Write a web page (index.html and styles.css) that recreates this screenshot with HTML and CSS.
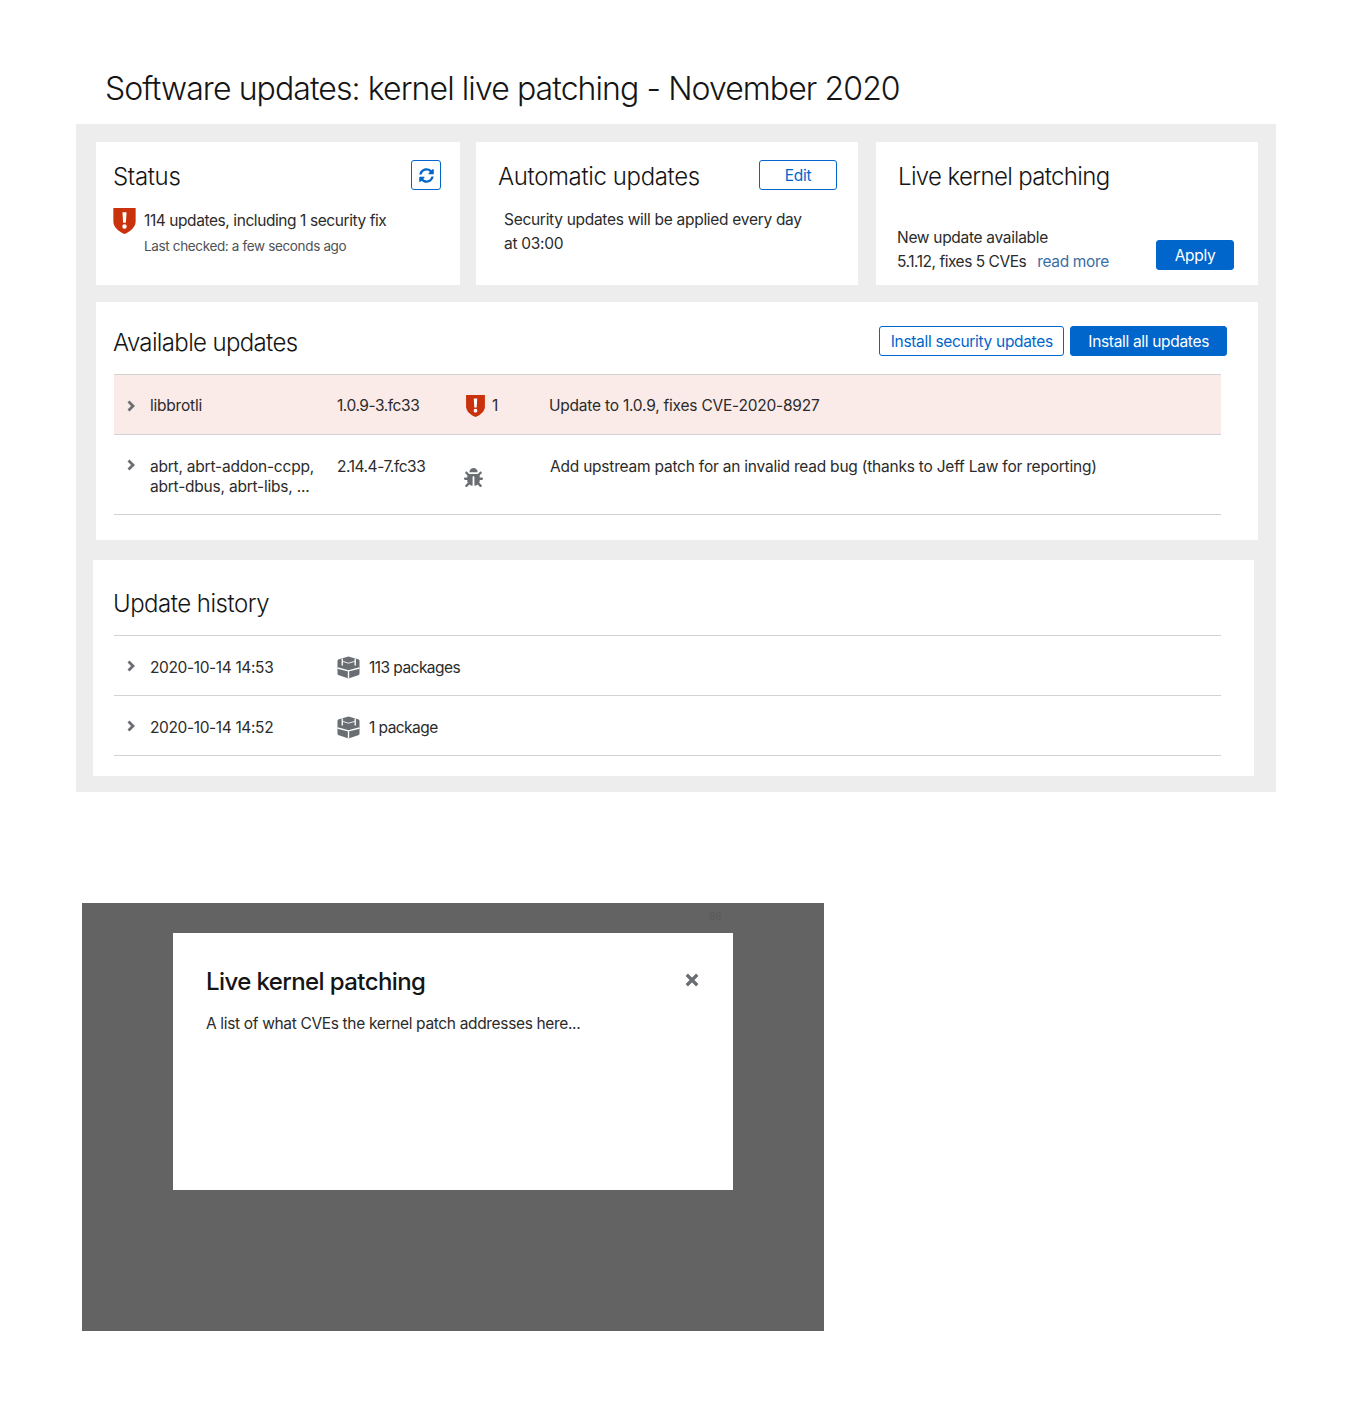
FILE: index.html
```html
<!DOCTYPE html>
<html>
<head>
    <meta charset="utf-8" />
    <title>Software updates: kernel live patching</title>
    <link rel="stylesheet" href="styles.css">
</head>
<body>
    <h1 class="page-title">Software updates: kernel live patching - November 2020</h1>

    <div class="panel">
        <div class="top-row">
            <section class="card card-status">
                <div class="card-head">
                    <h2>Status</h2>
                    <button class="btn-icon">
                        <svg width="15" height="15" viewBox="0 0 512 512"><path fill="#06c" d="M370.72 133.28C339.458 104.008 298.888 87.962 255.848 88c-77.458.068-144.328 53.178-162.791 126.85-1.344 5.363-6.122 9.15-11.651 9.15H24.103c-7.498 0-13.194-6.807-11.807-14.176C33.933 94.924 134.813 8 256 8c66.448 0 126.791 26.136 171.315 68.685L463.03 40.97C478.149 25.851 504 36.559 504 57.941V192c0 13.255-10.745 24-24 24H345.941c-21.382 0-32.09-25.851-16.971-40.971l41.75-41.749zM32 296h134.059c21.382 0 32.09 25.851 16.971 40.971l-41.75 41.75c31.262 29.273 71.835 45.319 114.876 45.28 77.418-.07 144.315-53.144 162.787-126.849 1.344-5.363 6.122-9.15 11.651-9.15h57.304c7.498 0 13.194 6.807 11.807 14.176C478.067 417.076 377.187 504 256 504c-66.448 0-126.791-26.136-171.315-68.685L48.97 471.03C33.851 486.149 8 475.441 8 454.059V320c0-13.255 10.745-24 24-24z"/></svg>
                    </button>
                </div>
                <div class="status-line">
                    <svg class="shield shield-lg" viewBox="0 0 24 28"><path fill="#c9320c" d="M0 0H24V14.500C24 21 17.500 25.800 12 28C6.500 25.800 0 21 0 14.500Z"/><path fill="#fff" d="M9.800 4.500H14.200L13.500 16H10.500ZM12 17.500A2.400 2.400 0 1 1 12 22.300A2.400 2.400 0 1 1 12 17.500Z"/></svg>
                    <div>
                        <p class="status-text">114 updates, including 1 security fix</p>
                        <p class="status-sub">Last checked: a few seconds ago</p>
                    </div>
                </div>
            </section>

            <section class="card card-auto">
                <div class="card-head">
                    <h2>Automatic updates</h2>
                    <button class="btn btn-outline btn-edit">Edit</button>
                </div>
                <p class="auto-text">Security updates will be applied every day<br>at 03:00</p>
            </section>

            <section class="card card-live">
                <h2>Live kernel patching</h2>
                <div class="live-foot">
                    <p>New update available<br><span class="live-version">5.1.12, fixes 5 CVEs</span> <a href="#" class="read-more">read more</a></p>
                    <button class="btn btn-primary btn-apply">Apply</button>
                </div>
            </section>
        </div>

        <section class="card card-available">
            <div class="card-head">
                <h2>Available updates</h2>
                <div class="actions">
                    <button class="btn btn-outline btn-security">Install security updates</button>
                    <button class="btn btn-primary">Install all updates</button>
                </div>
            </div>
            <div class="update-list">
                <div class="update-row danger">
                    <svg class="chevron" viewBox="0 0 8 12"><path d="M1.500 1.500L6 6L1.500 10.500"/></svg>
                    <div class="u-name">libbrotli</div>
                    <div class="u-version">1.0.9-3.fc33</div>
                    <div class="u-type">
                        <svg class="shield shield-sm" viewBox="0 0 24 28"><path fill="#c9320c" d="M0 0H24V14.500C24 21 17.500 25.800 12 28C6.500 25.800 0 21 0 14.500Z"/><path fill="#fff" d="M9.800 4.500H14.200L13.500 16H10.500ZM12 17.500A2.400 2.400 0 1 1 12 22.300A2.400 2.400 0 1 1 12 17.500Z"/></svg>
                        <span>1</span>
                    </div>
                    <div class="u-desc">Update to 1.0.9, fixes CVE-2020-8927</div>
                </div>
                <div class="update-row tall">
                    <svg class="chevron" viewBox="0 0 8 12"><path d="M1.500 1.500L6 6L1.500 10.500"/></svg>
                    <div class="u-name">abrt, abrt-addon-ccpp,<br>abrt-dbus, abrt-libs, ...</div>
                    <div class="u-version">2.14.4-7.fc33</div>
                    <div class="u-type">
                        <svg class="bug" viewBox="0 0 512 512"><path fill="#6a6e73" d="M511.988 288.9c-.478 17.43-15.217 31.1-32.653 31.1H424v16c0 21.864-4.882 42.584-13.6 61.145l60.228 60.228c12.496 12.497 12.496 32.758 0 45.255-12.498 12.497-32.759 12.496-45.256 0l-54.736-54.736C345.886 467.965 314.351 480 280 480V236c0-6.627-5.373-12-12-12h-24c-6.627 0-12 5.373-12 12v244c-34.351 0-65.886-12.035-90.636-32.108l-54.736 54.736c-12.498 12.497-32.759 12.496-45.256 0-12.496-12.497-12.496-32.758 0-45.255l60.228-60.228C92.882 378.584 88 357.864 88 336v-16H32.666C15.230 320 .491 306.330.013 288.900-.484 270.816 14.028 256 32 256h56v-58.745l-46.628-46.628c-12.496-12.497-12.496-32.758 0-45.255 12.498-12.497 32.758-12.497 45.256 0L141.255 160h229.489l54.627-54.627c12.498-12.497 32.758-12.497 45.256 0 12.496 12.497 12.496 32.758 0 45.255L424 197.255V256h56c17.972 0 32.484 14.816 31.988 32.900zM257 0c-61.856 0-112 50.144-112 112h224C369 50.144 318.856 0 257 0z"/></svg>
                    </div>
                    <div class="u-desc shift">Add upstream patch for an invalid read bug (thanks to Jeff Law for reporting)</div>
                </div>
            </div>
        </section>

        <section class="card card-history">
            <h2>Update history</h2>
            <div class="history-list">
                <div class="history-row">
                    <svg class="chevron" viewBox="0 0 8 12"><path d="M1.500 1.500L6 6L1.500 10.500"/></svg>
                    <div class="h-date">2020-10-14 14:53</div>
                    <svg class="cube" viewBox="0 0 24 24"><path class="cube-fill" d="M2 3.500L12 .5L22 3.500C23 3.800 23.500 4.500 23.500 5.500V18C23.500 19 23 19.800 22 20.200L12 23.500L2 20.200C1 19.800 .5 19 .5 18V5.500C.5 4.500 1 3.800 2 3.500Z"/><path class="cube-gap" d="M5.500 2.500V10M19 2.500V10M.5 12.500L12 15.500L23.500 12.500M12 15.500V23.500"/><path class="cube-edge" d="M5.500 5.500L12 7.500L19 5.500"/></svg>
                    <div class="h-count">113 packages</div>
                </div>
                <div class="history-row">
                    <svg class="chevron" viewBox="0 0 8 12"><path d="M1.500 1.500L6 6L1.500 10.500"/></svg>
                    <div class="h-date">2020-10-14 14:52</div>
                    <svg class="cube" viewBox="0 0 24 24"><path class="cube-fill" d="M2 3.500L12 .5L22 3.500C23 3.800 23.500 4.500 23.500 5.500V18C23.500 19 23 19.800 22 20.200L12 23.500L2 20.200C1 19.800 .5 19 .5 18V5.500C.5 4.500 1 3.800 2 3.500Z"/><path class="cube-gap" d="M5.500 2.500V10M19 2.500V10M.5 12.500L12 15.500L23.500 12.500M12 15.500V23.500"/><path class="cube-edge" d="M5.500 5.500L12 7.500L19 5.500"/></svg>
                    <div class="h-count">1 package</div>
                </div>
            </div>
        </section>
    </div>

    <div class="backdrop">
        <span class="ghost">88</span>
        <div class="dialog">
            <div class="dialog-head">
                <h2>Live kernel patching</h2>
                <svg class="close" viewBox="0 0 12 12"><path d="M1.500 1.500L10.500 10.500M10.500 1.500L1.500 10.500"/></svg>
            </div>
            <p>A list of what CVEs the kernel patch addresses here...</p>
        </div>
    </div>
</body>
</html>
```

FILE: styles.css
```css
body {
    font-family: Inter, "Open Sans", sans-serif;
    margin: 0;
    color: #151515;
    background-color: #fff;
    height: 1407px;
    overflow: hidden;
}

h1, h2, p {
    margin: 0;
    font-weight: 400;
}

.page-title {
    font-size: 32px;
    line-height: 40px;
    font-weight: 300;
    letter-spacing: -0.91px;
    padding: 69px 0 15px 105px;
}

.panel {
    width: 1200px;
    height: 668px;
    margin-left: 76px;
    padding: 18px 18px 0 20px;
    box-sizing: border-box;
    background-color: #ededed;
}

.top-row {
    display: flex;
    height: 143px;
}

.card {
    background-color: #fff;
    box-sizing: border-box;
}

.card h2 {
    font-size: 24px;
    line-height: 32px;
    font-weight: 300;
    letter-spacing: -0.65px;
    padding-top: 1px;
}

.card-status h2 {
    letter-spacing: -0.3px;
}

.card-auto h2 {
    letter-spacing: -0.37px;
}

.card-head {
    display: flex;
    justify-content: space-between;
    align-items: flex-start;
}

.card-status {
    width: 364px;
    padding: 18px 19px 0 17px;
}

.card-auto {
    width: 382px;
    margin-left: 16px;
    padding: 18px 21px 0 22px;
}

.card-live {
    width: 382px;
    margin-left: 18px;
    padding: 18px 24px 0 21px;
}

.card-live h2 {
    padding-left: 1px;
}

.btn {
    font-family: inherit;
    font-size: 15.5px;
    line-height: 20px;
    height: 30px;
    padding: 1px 17px 0;
    border-radius: 3px;
    box-sizing: border-box;
    letter-spacing: -0.32px;
}

.btn-outline {
    color: #06c;
    background-color: #fff;
    border: 1px solid #06c;
}

.btn-primary {
    color: #fff;
    background-color: #06c;
    border: 1px solid #06c;
}

.btn-security {
    padding: 1px 10.5px 0;
}

.btn-icon {
    display: flex;
    align-items: center;
    justify-content: center;
    width: 30px;
    height: 30px;
    padding: 0;
    background-color: #fff;
    border: 1px solid #06c;
    border-radius: 3px;
}

.btn-edit {
    width: 78px;
    padding: 1px 0 0;
}

.status-line {
    display: flex;
    margin-top: 15px;
}

.shield {
    display: block;
}

.shield-lg {
    width: 23px;
    height: 26px;
    margin-right: 8px;
    flex: none;
}

.status-text {
    font-size: 15.5px;
    line-height: 24px;
    letter-spacing: -0.42px;
    color: #2b2b2b;
    padding-top: 1px;
}

.status-sub {
    font-size: 13.5px;
    line-height: 20px;
    margin-top: 3px;
    color: #4f5255;
    letter-spacing: -0.35px;
}

.auto-text {
    font-size: 15.5px;
    line-height: 24px;
    letter-spacing: -0.29px;
    margin-top: 15px;
    margin-left: 6px;
    color: #2b2b2b;
}

.live-foot {
    display: flex;
    justify-content: space-between;
    align-items: flex-end;
    margin-top: 33px;
}

.live-foot p {
    font-size: 15.5px;
    line-height: 24px;
    letter-spacing: -0.3px;
    color: #2b2b2b;
}

.live-version {
    letter-spacing: -0.47px;
}

.read-more {
    color: #3a6ea5;
    text-decoration: none;
    margin-left: 7px;
    letter-spacing: -0.35px;
}

.btn-apply {
    width: 78px;
    padding: 1px 0 0;
    margin-bottom: 4px;
}

.card-available {
    width: 1162px;
    height: 238px;
    margin-top: 17px;
    padding: 24px 31px 0 17px;
}

.card-available .card-head {
    height: 48px;
    align-items: flex-start;
}

.actions {
    display: flex;
    gap: 6px;
}

.update-list,
.history-list {
    width: 1107px;
    border-top: 1px solid #d2d2d2;
}

.update-list {
    margin-left: 1px;
}

.update-row,
.history-row {
    display: grid;
    align-items: center;
    font-size: 15.5px;
    line-height: 20px;
    letter-spacing: -0.22px;
    color: #2b2b2b;
    border-bottom: 1px solid #d2d2d2;
    box-sizing: border-box;
}

.update-row {
    grid-template-columns: 36px 187px 128px 84px 1fr;
    height: 60px;
    padding-top: 2px;
}

.update-row.danger {
    background-color: #faeae8;
}

.update-row.tall {
    height: 80px;
    align-items: start;
    padding-top: 22px;
}

.u-version {
    letter-spacing: -0.45px;
}

.chevron {
    width: 8px;
    height: 12px;
    margin-left: 13px;
    fill: none;
    stroke: #6a6e73;
    stroke-width: 2.8;
}

.tall .chevron {
    margin-top: 2px;
}

.u-type {
    display: flex;
    align-items: center;
    gap: 7px;
}

.shield-sm {
    width: 19px;
    height: 22px;
    margin: 1px 0 0 1px;
}

.bug {
    width: 19px;
    height: 19px;
    margin: 11px 0 0 -1px;
}

.shift {
    margin-left: 1px;
}

.card-history {
    width: 1161px;
    height: 216px;
    margin-top: 20px;
    margin-left: -3px;
    padding: 27px 0 0 21px;
}

.card-history h2 {
    margin-left: -1px;
    letter-spacing: -0.5px;
}

.history-list {
    margin-top: 15px;
}

.history-row {
    grid-template-columns: 36px 187px 32px 1fr;
    height: 60px;
    padding-top: 4px;
}

.history-row .chevron {
    margin-bottom: 3px;
}

.h-date {
    letter-spacing: -0.37px;
}

.h-count {
    letter-spacing: -0.55px;
}

.cube {
    width: 23px;
    height: 23px;
}

.cube-fill {
    fill: #6a6e73;
}

.cube-gap {
    fill: none;
    stroke: #fff;
    stroke-width: 1.4;
}

.cube-edge {
    fill: none;
    stroke: #fff;
    stroke-width: 0.9;
}

.backdrop {
    position: relative;
    width: 742px;
    height: 428px;
    margin: 111px 0 0 82px;
    padding: 30px 0 0 91px;
    box-sizing: border-box;
    background-color: #636363;
}

.ghost {
    position: absolute;
    top: 7px;
    left: 627px;
    font-size: 10px;
    line-height: 12px;
    color: #5a5a5a;
}

.dialog {
    width: 560px;
    height: 257px;
    padding: 33px 33px 0;
    box-sizing: border-box;
    background-color: #fff;
}

.dialog-head {
    display: flex;
    justify-content: space-between;
    align-items: flex-start;
}

.dialog h2 {
    font-size: 24px;
    line-height: 32px;
    letter-spacing: -0.6px;
    font-weight: 500;
}

.close {
    width: 14px;
    height: 14px;
    margin: 7px 1px 0 0;
    fill: none;
    stroke: #6a6e73;
    stroke-width: 2.8;
}

.dialog p {
    font-size: 15.5px;
    line-height: 24px;
    letter-spacing: -0.34px;
    margin-top: 14px;
    color: #2b2b2b;
}
```
